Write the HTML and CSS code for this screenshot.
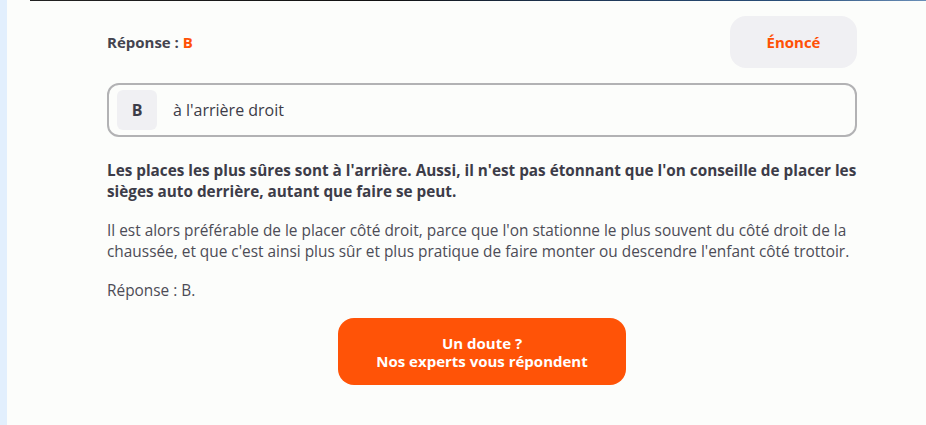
FILE: index.html
```
<!DOCTYPE html>
<html lang="fr">
<head>
    <meta charset="UTF-8">
    <meta name="viewport" content="width=device-width, initial-scale=1.0">
    <title>Correction de la question</title>
    <link rel="stylesheet" href="styles.css">
</head>
<body>
    <div class="side-strip"></div>
    <main class="page">
        <div class="top-strip"></div>
        <div class="content">
            <div class="answer-head">
                <p class="answer-label">Réponse : <span class="answer-letter">B</span></p>
                <button class="statement-btn">Énoncé</button>
            </div>

            <div class="choice">
                <span class="choice-letter">B</span>
                <span class="choice-text">à l'arrière droit</span>
            </div>

            <div class="explanation">
                <p class="lead">Les places les plus sûres sont à l'arrière. Aussi, il n'est pas étonnant que l'on conseille de placer les sièges auto derrière, autant que faire se peut.</p>
                <p>Il est alors préférable de le placer côté droit, parce que l'on stationne le plus souvent du côté droit de la chaussée, et que c'est ainsi plus sûr et plus pratique de faire monter ou descendre l'enfant côté trottoir.</p>
                <p>Réponse : B.</p>
            </div>

            <div class="help">
                <button class="help-btn">Un doute ?<br>Nos experts vous répondent</button>
            </div>
        </div>
    </main>
</body>
</html>
```
FILE: styles.css
```
body {
    margin: 0;
    padding: 0;
    display: flex;
    min-height: 425px;
    background-color: #fcfdfb;
    color: #3c3c48;
    font-family: "Open Sans", "Noto Sans", sans-serif;
}
.side-strip {
    width: 7px;
    flex-shrink: 0;
    background-color: #e2effd;
}
.page {
    flex: 1;
}
.top-strip {
    height: 1px;
    margin-left: 23px;
    background: linear-gradient(90deg, #222 0%, #111 40%, #1d3553 60%, #2a4f7a 85%, #6a8fb8 100%);
}
.content {
    width: 750px;
    margin-left: 100px;
}
.answer-head {
    display: flex;
    justify-content: space-between;
    align-items: center;
    padding-top: 15px;
}
.answer-label {
    margin: 0;
    font-size: 15px;
    font-weight: 700;
    color: #44444f;
}
.answer-letter {
    color: #ff5106;
}
.statement-btn {
    width: 127px;
    height: 52px;
    border: none;
    border-radius: 16px;
    background-color: #f0f0f3;
    color: #ff5106;
    font-family: inherit;
    font-size: 15px;
    font-weight: 700;
    cursor: pointer;
}
.choice {
    display: flex;
    align-items: center;
    gap: 16px;
    margin-top: 15px;
    padding: 5px 8px;
    border: 2px solid #b2b2b4;
    border-radius: 12px;
}
.choice-letter {
    display: flex;
    align-items: center;
    justify-content: center;
    width: 40px;
    height: 40px;
    border-radius: 6px;
    background-color: #f0f0f3;
    font-size: 16px;
    font-weight: 700;
    color: #3c3c48;
}
.choice-text {
    font-size: 16px;
    font-weight: 500;
    color: #3c3c48;
}
.explanation {
    margin-top: 23px;
}
.explanation p {
    margin: 0 0 18px;
    font-size: 15.4px;
    line-height: 21px;
    color: #4c4c56;
}
.explanation .lead {
    font-size: 15.3px;
    font-weight: 700;
    color: #3c3c48;
}
.help {
    display: flex;
    justify-content: center;
    margin-top: -1px;
}
.help-btn {
    width: 288px;
    height: 67px;
    border: none;
    border-radius: 16px;
    background-color: #ff5307;
    color: white;
    font-family: inherit;
    font-size: 15px;
    line-height: 18px;
    font-weight: 700;
    cursor: pointer;
}
```
